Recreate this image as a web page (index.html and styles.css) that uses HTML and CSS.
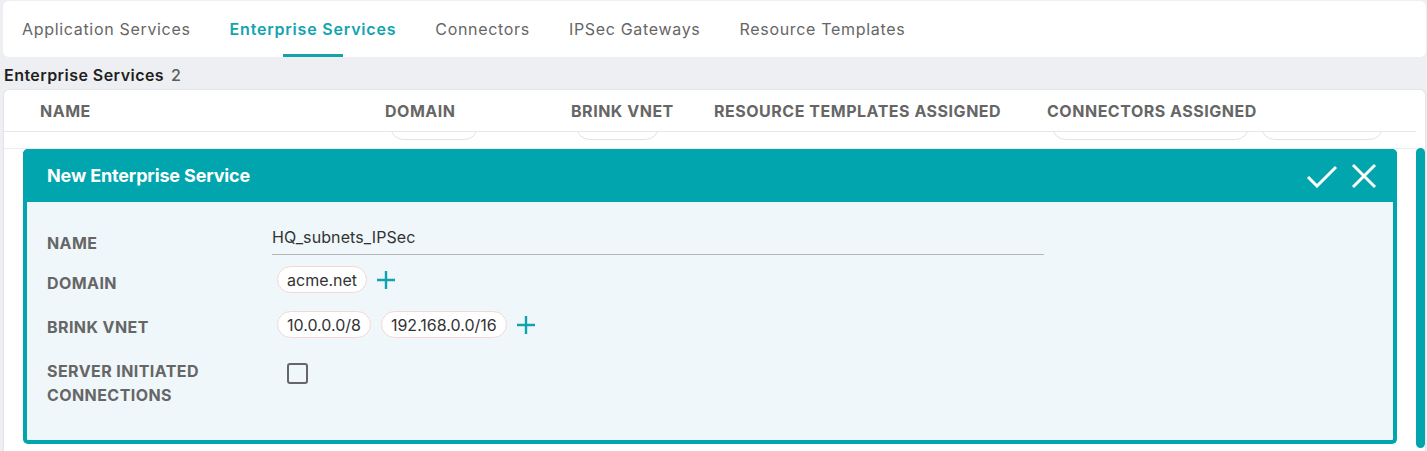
FILE: index.html
```html
<!DOCTYPE html>
<html>
<head>
<meta charset="utf-8">
<link rel="stylesheet" href="styles.css">
</head>
<body>
<nav class="tabs">
  <a class="tab">Application Services</a>
  <a class="tab active">Enterprise Services</a>
  <a class="tab">Connectors</a>
  <a class="tab">IPSec Gateways</a>
  <a class="tab">Resource Templates</a>
</nav>
<div class="title">Enterprise Services <span class="count">2</span></div>
<section class="card">
  <div class="content">
    <div class="grid head">
      <div>NAME</div>
      <div>DOMAIN</div>
      <div>BRINK VNET</div>
      <div>RESOURCE TEMPLATES ASSIGNED</div>
      <div>CONNECTORS ASSIGNED</div>
    </div>
    <div class="grid clipped">
      <div></div>
      <div class="cell"><span class="ghost w88"></span></div>
      <div class="cell"><span class="ghost w83"></span></div>
      <div></div>
      <div class="cell"><span class="ghost w197"></span><span class="ghost w122"></span></div>
    </div>
    <div class="editor">
      <header class="editor-head">
        <h2>New Enterprise Service</h2>
        <div class="actions">
          <svg class="ico-check" width="32" height="24" viewBox="0 0 32 24"><path d="M2 13 L11 22 L30 3" fill="none" stroke="#fff" stroke-width="3"/></svg>
          <svg class="ico-x" width="26" height="26" viewBox="0 0 26 26"><path d="M2 2 L24 24 M24 2 L2 24" fill="none" stroke="#fff" stroke-width="3"/></svg>
        </div>
      </header>
      <div class="form">
        <div class="row r1">
          <div class="label">NAME</div>
          <div class="input">HQ_subnets_IPSec</div>
        </div>
        <div class="row r2">
          <div class="label">DOMAIN</div>
          <div class="chips">
            <span class="chip">acme.net</span>
            <svg class="plus" width="18" height="18" viewBox="0 0 18 18"><path d="M9 0 V18 M0 9 H18" stroke="#11a3ad" stroke-width="2.4"/></svg>
          </div>
        </div>
        <div class="row r3">
          <div class="label">BRINK VNET</div>
          <div class="chips">
            <span class="chip">10.0.0.0/8</span>
            <span class="chip">192.168.0.0/16</span>
            <svg class="plus" width="18" height="18" viewBox="0 0 18 18"><path d="M9 0 V18 M0 9 H18" stroke="#11a3ad" stroke-width="2.4"/></svg>
          </div>
        </div>
        <div class="row r4">
          <div class="label">SERVER INITIATED<br>CONNECTIONS</div>
          <span class="checkbox"></span>
        </div>
      </div>
    </div>
    <div class="after"></div>
  </div>
  <div class="scrollbar"><div class="thumb"></div></div>
</section>
</body>
</html>
```
FILE: styles.css
```css
* { box-sizing: border-box; }
html, body { margin: 0; padding: 0; }
body {
  background: #eeeff2;
  font-family: Inter, "Noto Sans", sans-serif;
  height: 451px;
  overflow: hidden;
}
.tabs {
  margin: 1px 1px 0 3px;
  height: 56px;
  background: #fff;
  border-radius: 6px;
  display: flex;
  gap: 39px;
  padding-left: 19px;
  align-items: stretch;
}
.tab {
  position: relative;
  display: flex;
  align-items: center;
  font-size: 16px;
  color: #666;
  letter-spacing: 0.68px;
  padding-bottom: 1px;
}
.tab.active {
  color: #12a4ae;
  font-weight: 600;
  letter-spacing: 0.8px;
}
.tab.active::after {
  content: "";
  position: absolute;
  left: 50%;
  bottom: 0;
  width: 60px;
  margin-left: -30px;
  height: 3px;
  background: #12a4ae;
}
.title {
  height: 32px;
  display: flex;
  align-items: center;
  gap: 7px;
  padding-left: 4px;
  padding-top: 3px;
  font-size: 16px;
  font-weight: 600;
  letter-spacing: 0.45px;
  color: #1f1f1f;
}
.count { color: #5a5a5a; font-weight: 500; }
.card {
  margin: 0 1px 0 3px;
  height: 370px;
  background: #fff;
  border: 1px solid #e3e4e7;
  border-bottom: none;
  border-radius: 6px 6px 0 0;
  display: flex;
}
.content { flex: 1; display: flex; flex-direction: column; min-width: 0; }
.grid {
  display: grid;
  grid-template-columns: 345px 186px 143px 333px 1fr;
  padding-left: 36px;
}
.head {
  height: 42px;
  align-items: center;
  border-bottom: 1px solid #e8e8ea;
  font-size: 16px;
  font-weight: 700;
  letter-spacing: 0.52px;
  color: #666;
}
.clipped {
  height: 17px;
  overflow: hidden;
  border-bottom: 1px solid #ececee;
}
.cell {
  display: flex;
  align-items: flex-end;
  gap: 12px;
  padding-left: 5px;
  padding-bottom: 8px;
  height: 16px;
}
.ghost {
  flex: none;
  height: 27px;
  border: 1px solid #e2e2e2;
  border-radius: 14px;
}
.w88 { width: 88px; }
.w83 { width: 83px; }
.w197 { width: 197px; }
.w122 { width: 122px; }
.editor {
  margin: 0 19px 0 19px;
  height: 295px;
  border: 4px solid #00a5ae;
  border-top: none;
  border-radius: 5px;
  background: #eff7fa;
  display: flex;
  flex-direction: column;
}
.editor-head {
  margin: 0 -4px;
  height: 53px;
  background: #00a5ae;
  border-radius: 5px 5px 0 0;
  display: flex;
  align-items: center;
  justify-content: space-between;
  padding: 0 20px 0 24px;
}
.editor-head h2 {
  margin: 0;
  color: #fff;
  font-size: 18px;
  font-weight: 700;
  letter-spacing: -0.15px;
}
.actions { display: flex; align-items: center; gap: 13px; padding-top: 1px; }
.form { padding: 22px 20px 0 20px; display: flex; flex-direction: column; }
.row { display: flex; align-items: flex-start; }
.label {
  width: 225px;
  flex: none;
  font-size: 16px;
  font-weight: 700;
  letter-spacing: 0.42px;
  color: #666;
  line-height: 24px;
}
.r1 { align-items: flex-end; }
.input {
  width: 772px;
  height: 31px;
  padding-top: 1px;
  line-height: 24px;
  font-size: 16px;
  letter-spacing: 0.1px;
  color: #333;
  border-bottom: 1px solid #b4b6b8;
}
.r2 { margin-top: 11px; }
.r2 .label { margin-top: 5px; }
.r3 { margin-top: 16px; }
.r3 .label { margin-top: 4px; }
.r4 { margin-top: 20px; }
.chips { display: flex; align-items: center; gap: 10px; padding-left: 5px; }
.chip {
  height: 27px;
  display: inline-flex;
  align-items: center;
  padding: 0 9px;
  background: #fff;
  border: 1px solid #f4d6d6;
  border-radius: 14px;
  font-size: 16px;
  color: #333;
}
.plus { flex: none; }
.checkbox {
  margin: 4px 0 0 15px;
  width: 21px;
  height: 21px;
  border: 2px solid #666;
  border-radius: 3px;
}
.after { flex: 1; border-bottom: 1px solid #e8e8ea; height: 2px; }
.scrollbar { width: 9px; flex: none; }
.thumb {
  margin-top: 58px;
  height: 300px;
  background: #00a5ae;
  border-radius: 5px;
}
```
